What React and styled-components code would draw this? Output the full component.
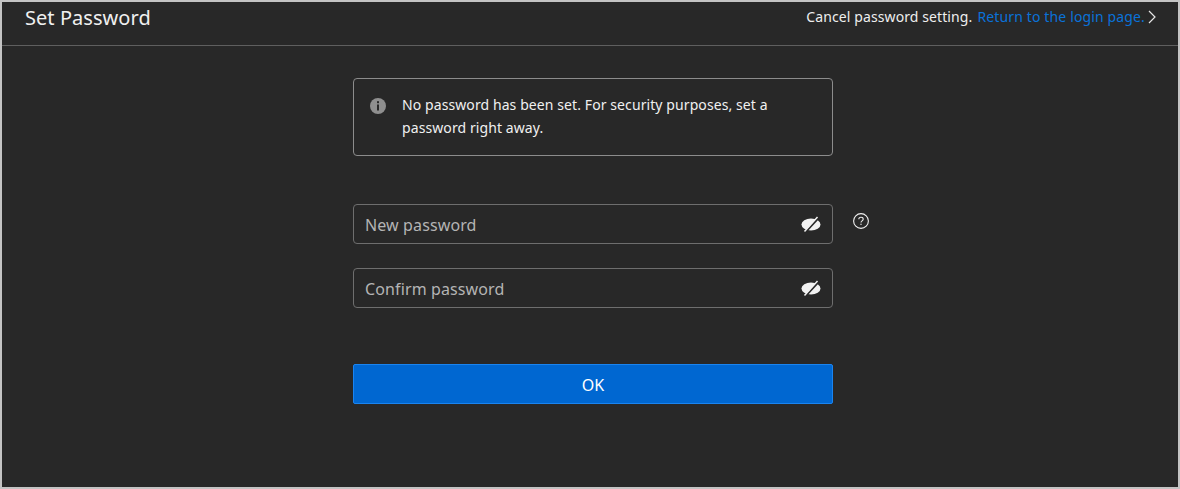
import React from "react";
import styled, { createGlobalStyle } from "styled-components";

const Global = createGlobalStyle`
  html, body { margin: 0; padding: 0; height: 100%; background: #282828; }
  #root { height: 100%; }
  * { box-sizing: border-box; }
`;
const Frame = styled.div`
  width: 1180px; height: 489px; border: 2px solid #c4c4c4; background: #282828;
  color: #f0f0f0; font-family: "Noto Sans", "Open Sans", sans-serif; overflow: hidden;
`;
const Header = styled.header`
  height: 44px; border-bottom: 1px solid #5f5f5f; padding: 0 21px 0 23px;
  display: flex; justify-content: space-between; align-items: flex-start;
`;
const Title = styled.h1`
  margin: 0; font-size: 20px; font-weight: 400; line-height: 32px; color: #f0f0f0; letter-spacing: 0.05px;
`;
const CancelNote = styled.div`
  font-size: 14px; line-height: 30px; display: flex; align-items: center; color: #eee; letter-spacing: 0.1px;
`;
const ReturnLink = styled.a`
  color: #0a72d8; margin-left: 5px; letter-spacing: 0.14px;
`;
const Main = styled.main`
  width: 480px; margin: 32px 0 0 351px; position: relative;
`;
const Notice = styled.div`
  height: 78px; border: 1px solid #8c8c8c; border-radius: 4px; padding: 14px 48px 0 16px;
  display: flex; gap: 16px; font-size: 14px; line-height: 23px; color: #f0f0f0; letter-spacing: 0.09px;
`;
const InfoSlot = styled.span`
  padding-top: 1px; display: block;
`;
const Field = styled.div`
  height: 40px; border: 1px solid #6e6e6e; border-radius: 4px; margin-top: ${p => p.$top}px;
  display: flex; align-items: center; justify-content: space-between; padding: 0 11px;
  font-size: 16px; color: #b4b4b4; letter-spacing: 0.12px;
`;
const FieldLabel = styled.span`
  padding-top: 2px;
`;
const Help = styled.span`
  position: absolute; left: 500px; top: 135px; display: flex;
`;
const OkButton = styled.button`
  display: block; width: 100%; height: 40px; margin-top: 56px; background: #0067d1;
  border: 1px solid #1a84f0; border-radius: 2px; color: #fff; padding: 2px 0 0;
  font: 400 16px "Noto Sans", "Open Sans", sans-serif;
`;
const IconSvg = styled.svg`flex: none; display: block;`;

const Chevron = () => (
  <IconSvg width="10" height="14" viewBox="0 0 10 14" style={{ marginLeft: 2 }}>
    <path d="M2 1 8 7l-6 6" fill="none" stroke="#e6e6e6" strokeWidth="1.200" />
  </IconSvg>
);
const Info = () => (
  <IconSvg width="16" height="16" viewBox="0 0 16 16" style={{ marginTop: 4 }}>
    <circle cx="8" cy="8" r="8" fill="#8f8f8f" />
    <rect x="7" y="3.200" width="2" height="2" fill="#282828" />
    <rect x="7" y="6.500" width="2" height="6" fill="#282828" />
  </IconSvg>
);
const EyeOff = () => (
  <IconSvg width="20" height="18" viewBox="0 0 20 18">
    <ellipse cx="10" cy="9.500" rx="9.500" ry="6" fill="#f2f2f2" />
    <path d="M5 16.500 17.500 3" stroke="#282828" strokeWidth="2" />
    <path d="M3.500 16.500 16.500 2" stroke="#f2f2f2" strokeWidth="1.500" />
  </IconSvg>
);
const Question = () => (
  <IconSvg width="16" height="16" viewBox="0 0 16 16">
    <circle cx="8" cy="8" r="7.400" fill="none" stroke="#f0f0f0" strokeWidth="1.100" />
    <path d="M5.800 6.300C5.800 5 6.800 4.300 8 4.300s2.200.8 2.200 1.900c0 1.700-2.200 1.600-2.200 3.300" fill="none" stroke="#f0f0f0" strokeWidth="1.100" />
    <rect x="7.400" y="10.700" width="1.200" height="1.200" fill="#f0f0f0" />
  </IconSvg>
);

export default function App() {
  return (
    <Frame>
      <Global />
      <Header>
        <Title>Set Password</Title>
        <CancelNote>
          Cancel password setting.<ReturnLink>Return to the login page.</ReturnLink><Chevron />
        </CancelNote>
      </Header>
      <Main>
        <Notice>
          <InfoSlot><Info /></InfoSlot>
          <span>No password has been set. For security purposes, set a password right away.</span>
        </Notice>
        <Field $top={48}><FieldLabel>New password</FieldLabel><EyeOff /></Field>
        <Help><Question /></Help>
        <Field $top={24}><FieldLabel>Confirm password</FieldLabel><EyeOff /></Field>
        <OkButton>OK</OkButton>
      </Main>
    </Frame>
  );
}
